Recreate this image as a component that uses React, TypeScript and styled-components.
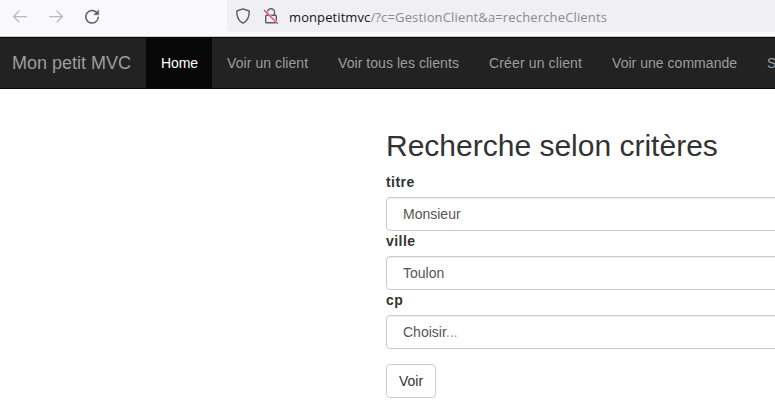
import React from "react";
import styled, { createGlobalStyle } from "styled-components";

const GlobalStyle = createGlobalStyle`
  * { box-sizing: border-box; }
  body {
    margin: 0;
    background: #fff;
    color: #333;
    font: 14px/20px "Liberation Sans", Arial, sans-serif;
    overflow: hidden;
  }
`;

const Window = styled.div`
  width: 100%;
  height: 419px;
  overflow: hidden;
`;

const Toolbar = styled.header`
  display: flex;
  height: 37px;
  background: #f9f9fb;
  border-bottom: 1px solid #ccc;
`;

const Controls = styled.div`
  display: flex;
  flex: 0 0 227px;
  gap: 20px;
  padding: 9px 0 0 12px;
`;

const Icon = styled.svg<{ $color: string }>`
  display: block;
  flex: none;
  width: 16px;
  height: 16px;
  fill: none;
  stroke: ${(p) => p.$color};
  stroke-width: 1.25;
  stroke-linecap: round;
  stroke-linejoin: round;
`;

const AddressBar = styled.div`
  display: flex;
  flex: 1;
  height: 32px;
  padding: 8px 0 0 8px;
  background: #f0f0f4;
  border-radius: 0 0 0 4px;
`;

const SecurityIcon = styled(Icon)`
  margin-left: 12px;
`;

const Url = styled.span`
  margin-left: 10px;
  font: 13px/18px "Open Sans", "Noto Sans", sans-serif;
  letter-spacing: 0.15px;
  white-space: nowrap;
  color: #8a8a90;
`;

const Host = styled.span`
  letter-spacing: 0.09px;
  color: #15141a;
`;

const Navbar = styled.nav`
  display: flex;
  height: 52px;
  background: #222;
  border: solid #080808;
  border-width: 1px 0;
  white-space: nowrap;
  overflow: hidden;
`;

const Brand = styled.a`
  flex: 0 0 146px;
  padding: 15px 15px 15px 12px;
  font-size: 18px;
  color: #9d9d9d;
`;

const NavLink = styled.a<{ $width: number; $spacing: number; $active?: boolean }>`
  flex: 0 0 ${(p) => p.$width}px;
  padding: 15px 0 15px 15px;
  letter-spacing: ${(p) => p.$spacing}px;
  color: ${(p) => (p.$active ? "#fff" : "#9d9d9d")};
  background: ${(p) => (p.$active ? "#080808" : "transparent")};
`;

const Form = styled.form`
  width: 584px;
  margin: 40px 0 0 386px;
`;

const Title = styled.h2`
  margin: 0 0 10px;
  font-size: 30px;
  font-weight: 500;
  line-height: 33px;
`;

const Label = styled.label`
  display: block;
  margin-bottom: 5px;
  font-weight: 700;
  letter-spacing: 0.45px;
`;

const Field = styled.div`
  height: 34px;
  padding: 6px 16px;
  border: 1px solid #ccc;
  border-radius: 4px;
  color: #555;
  background: #fff;
  box-shadow: inset 0 1px 1px rgba(0, 0, 0, 0.075);
`;

const Dots = styled.span`
  color: #6aa5cf;
`;

const Submit = styled.button`
  display: block;
  height: 34px;
  margin-top: 15px;
  padding: 6px 12px;
  border: 1px solid #ccc;
  border-radius: 4px;
  background: #fff;
  color: #333;
  font: inherit;
`;

const links = [
  { text: "Home", width: 66, spacing: -0.1 },
  { text: "Voir un client", width: 111, spacing: 0.07 },
  { text: "Voir tous les clients", width: 151, spacing: 0.05 },
  { text: "Créer un client", width: 123, spacing: 0.13 },
  { text: "Voir une commande", width: 155, spacing: 0.03 },
  { text: "S", width: 30, spacing: 0 },
];

export default function App() {
  return (
    <Window>
      <GlobalStyle />
      <Toolbar>
        <Controls>
          <Icon viewBox="0 0 16 16" $color="#b9b9be">
            <path d="M14.5 7.5H1.5M7 2L1.5 7.5L7 13" />
          </Icon>
          <Icon viewBox="0 0 16 16" $color="#b9b9be">
            <path d="M1.5 7.5H14.5M9 2l5.5 5.5L9 13" />
          </Icon>
          <Icon viewBox="0 0 16 16" $color="#5b5b66">
            <path d="M12.6 3.4A6.3 6.3 0 1 0 14.3 8.3" strokeWidth="1.5" />
            <path d="M14.6 1.2v4.6H10z" fill="#5b5b66" strokeWidth="0.5" />
          </Icon>
        </Controls>
        <AddressBar>
          <Icon viewBox="0 0 16 16" $color="#5b5b66">
            <path
              d="M8 .8L14.2 3C14.4 8.3 12.4 13 8 15.2C3.6 13 1.6 8.3 1.8 3Z"
              strokeWidth="1.4"
            />
          </Icon>
          <SecurityIcon viewBox="0 0 16 16" $color="#5b5b66">
            <path
              d="M4.5 7V4.2a3.5 3.5 0 0 1 7 0V7M3.7 7.2h8.6a1 1 0 0 1 1 1v5.6a1 1 0 0 1-1 1H3.7a1 1 0 0 1-1-1V8.2a1 1 0 0 1 1-1z"
              strokeWidth="1.4"
            />
            <path d="M1.6 2.2L14.8 15.4" stroke="#f0f0f4" strokeWidth="2" />
            <path d="M1.4 2.4L14.4 15.4" stroke="#e22850" strokeWidth="1.3" />
          </SecurityIcon>
          <Url>
            <Host>monpetitmvc</Host>/?c=GestionClient&amp;a=rechercheClients
          </Url>
        </AddressBar>
      </Toolbar>
      <Navbar>
        <Brand>Mon petit MVC</Brand>
        {links.map(({ text, width, spacing }, i) => (
          <NavLink key={text} $width={width} $spacing={spacing} $active={i === 0}>
            {text}
          </NavLink>
        ))}
      </Navbar>
      <Form>
        <Title>Recherche selon critères</Title>
        <Label>titre</Label>
        <Field>Monsieur</Field>
        <Label>ville</Label>
        <Field>Toulon</Field>
        <Label>cp</Label>
        <Field>
          Choisir<Dots>...</Dots>
        </Field>
        <Submit type="button">Voir</Submit>
      </Form>
    </Window>
  );
}
